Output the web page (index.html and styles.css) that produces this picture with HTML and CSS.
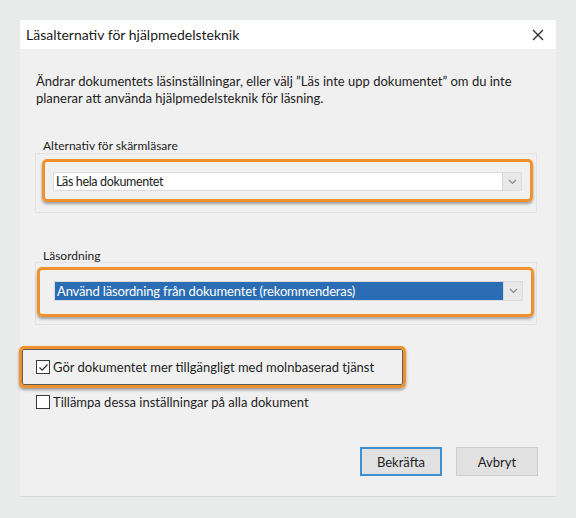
FILE: index.html
```html
<!DOCTYPE html>
<html lang="sv">
<head>
<meta charset="utf-8">
<title>Läsalternativ för hjälpmedelsteknik</title>
<link rel="stylesheet" href="styles.css">
</head>
<body>
<div class="dialog">
  <div class="titlebar">
    <span class="title">Läsalternativ för hjälpmedelsteknik</span>
    <svg class="close" width="12" height="12" viewBox="0 0 12 12"><path d="M1 1 L11 11 M11 1 L1 11" stroke="#2b2b2b" stroke-width="1.3" fill="none"/></svg>
  </div>
  <div class="body">
    <p class="desc">Ändrar dokumentets läsinställningar, eller välj ”Läs inte upp dokumentet” om du inte planerar att använda hjälpmedelsteknik för läsning.</p>

    <div class="glabel g1">Alternativ för skärmläsare</div>
    <div class="gbox gbox1">
      <div class="hl hl1">
        <div class="select">
          <span class="sel-text sel1">Läs hela dokumentet</span>
          <span class="drop"><svg width="9" height="6" viewBox="0 0 9 6"><path d="M1 1 L4.5 4.5 L8 1" stroke="#8a8a8a" stroke-width="1.2" fill="none"/></svg></span>
        </div>
      </div>
    </div>

    <div class="glabel g2">Läsordning</div>
    <div class="gbox gbox2">
      <div class="hl hl2">
        <div class="select select2">
          <span class="sel-text selected">Använd läsordning från dokumentet (rekommenderas)</span>
          <span class="drop"><svg width="9" height="6" viewBox="0 0 9 6"><path d="M1 1 L4.5 4.5 L8 1" stroke="#8a8a8a" stroke-width="1.2" fill="none"/></svg></span>
        </div>
      </div>
    </div>

    <div class="hl hl3">
      <label class="check">
        <span class="box"><svg width="11" height="11" viewBox="0 0 11 11"><path d="M1.5 5.5 L4.2 8.2 L9.5 2.5" stroke="#333" stroke-width="1.2" fill="none"/></svg></span>
        <span>Gör dokumentet mer tillgängligt med molnbaserad tjänst</span>
      </label>
    </div>

    <label class="check check2">
      <span class="box"></span>
      <span>Tillämpa dessa inställningar på alla dokument</span>
    </label>

    <div class="buttons">
      <button class="btn primary">Bekräfta</button>
      <button class="btn">Avbryt</button>
    </div>
  </div>
</div>
</body>
</html>
```
FILE: styles.css
```css
* { box-sizing: border-box; }
html, body { margin: 0; padding: 0; }
body {
  width: 576px;
  height: 518px;
  background: #e9ebeb;
  font-family: Lato, "Liberation Sans", sans-serif;
  color: #1e1e1e;
  overflow: hidden;
}
.dialog {
  margin: 20px 0 0 20px;
  width: 536px;
  background: #f0f0f0;
  border-bottom: 1px solid #d6d6d6;
}
.titlebar {
  height: 29px;
  background: #ffffff;
  display: flex;
  align-items: center;
  justify-content: space-between;
  padding: 0 12px 0 6px;
}
.title { font-size: 14px; color: #1a1a1a; }
.close { display: block; margin-top: 1px; }
.body { padding: 0 0 20px 0; }
.desc {
  margin: 24px 0 0 0;
  padding: 0 16px;
  font-size: 13px;
  line-height: 17px;
  color: #222;
}
.glabel {
  font-size: 12px;
  line-height: 14px;
  height: 14px;
  padding-left: 23px;
  color: #222;
}
.g1 { margin-top: 32px; }
.g2 { margin-top: 36px; }
.gbox {
  margin-left: 15px;
  width: 502px;
  border: 1px solid #e3e3e3;
}
.gbox1 { height: 60px; padding: 5px 0 0 6px; }
.gbox2 { height: 63px; padding: 4px 0 0 1px; margin-top: -1px; }
.hl {
  border: 3px solid #f0922b;
  border-radius: 5px;
  box-shadow: 0 2px 3px rgba(0,0,0,0.35);
}
.hl1 { width: 491px; height: 43px; padding: 10px 0 0 8px; }
.hl2 { width: 497px; height: 50px; padding: 11px 0 0 14px; }
.select {
  display: flex;
  width: 469px;
  height: 19px;
  background: #ffffff;
  border: 1px solid #dcdcdc;
}
.select2 { height: 20px; background: #f7f7f7; }
.sel-text {
  flex: 1;
  font-size: 13px;
  line-height: 17px;
  padding-left: 2px;
  color: #1a1a1a;
}
.sel1 { font-size: 12.5px; letter-spacing: -0.35px; }
.sel-text.selected {
  background: #2a6db4;
  color: #ffffff;
  line-height: 18px;
  letter-spacing: -0.15px;
}
.drop {
  width: 19px;
  background: #e8e8e8;
  border-left: 1px solid #d8d8d8;
  display: flex;
  align-items: center;
  justify-content: center;
}
.hl3 {
  margin: 21px 0 0 -1px;
  width: 387px;
  height: 42px;
  padding: 10px 0 0 14px;
  box-shadow: inset 0 0 0 1px #5c5c5c, 0 2px 3px rgba(0,0,0,0.35);
}
.check {
  display: flex;
  align-items: center;
  font-size: 13px;
  line-height: 16px;
  color: #1e1e1e;
}
.box {
  width: 14px;
  height: 14px;
  border: 1px solid #3a3a3a;
  background: #ffffff;
  margin-right: 3px;
  display: flex;
  align-items: center;
  justify-content: center;
}
.check2 { margin: 6px 0 0 16px; }
.buttons {
  display: flex;
  justify-content: flex-end;
  gap: 14px;
  padding-right: 18px;
  margin-top: 37px;
}
.btn {
  width: 82px;
  height: 29px;
  background: #e1e1e1;
  border: 1px solid #cdcdcd;
  font-family: Lato, "Liberation Sans", sans-serif;
  font-size: 13px;
  color: #1e1e1e;
  padding: 0;
}
.btn.primary { border: 2px solid #3e8fd0; }
```
